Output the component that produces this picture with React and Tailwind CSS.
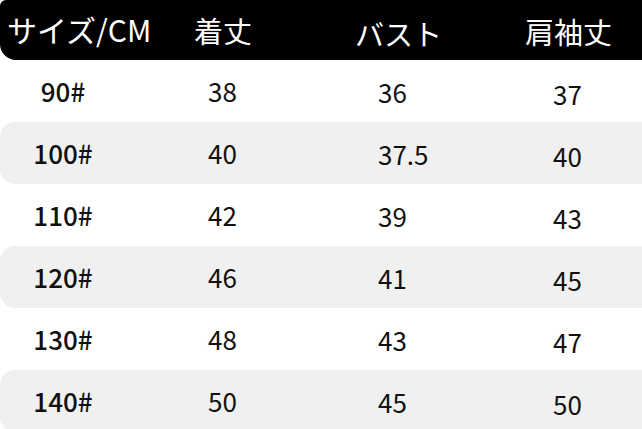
const headers = ["サイズ/CM", "着丈", "バスト", "肩袖丈"]

const rows = [
  ["90#", "38", "36", "37"],
  ["100#", "40", "37.5", "40"],
  ["110#", "42", "39", "43"],
  ["120#", "46", "41", "45"],
  ["130#", "48", "43", "47"],
  ["140#", "50", "45", "50"],
]

export default function App() {
  return (
    <div
      className="w-[642px] h-[429px] overflow-hidden bg-white text-[#111]"
      style={{ fontFamily: '"Noto Sans CJK JP", "Noto Sans", sans-serif' }}
    >
      {/* Header */}
      <div className="grid grid-cols-[160px_170px_175px_1fr] h-[60px] bg-black text-white text-[29px] leading-none rounded-tl-[6px] rounded-bl-[16px]">
        <div className="flex items-center pl-[7px] pb-[2px] text-[30px]">{headers[0]}</div>
        <div className="flex items-center pl-[34px]">{headers[1]}</div>
        <div className="flex items-center pl-[25px] pt-[7px]">{headers[2]}</div>
        <div className="flex items-center pl-[20px] pt-[3px]">{headers[3]}</div>
      </div>

      {/* Rows */}
      {rows.map((row, i) => (
        <div
          key={row[0]}
          className={
            "grid grid-cols-[160px_170px_175px_1fr] h-[62px] text-[26px] leading-none " +
            (i % 2 === 1 ? "bg-[#f0f0f0] rounded-l-[15px]" : "bg-white")
          }
        >
          <div className="flex items-center justify-center pr-[34px] font-medium">{row[0]}</div>
          <div className="flex items-center pl-[48px]">{row[1]}</div>
          <div className="flex items-center pl-[48px] pt-[2px]">{row[2]}</div>
          <div className="flex items-center pl-[48px] pt-[6px]">{row[3]}</div>
        </div>
      ))}
    </div>
  )
}
